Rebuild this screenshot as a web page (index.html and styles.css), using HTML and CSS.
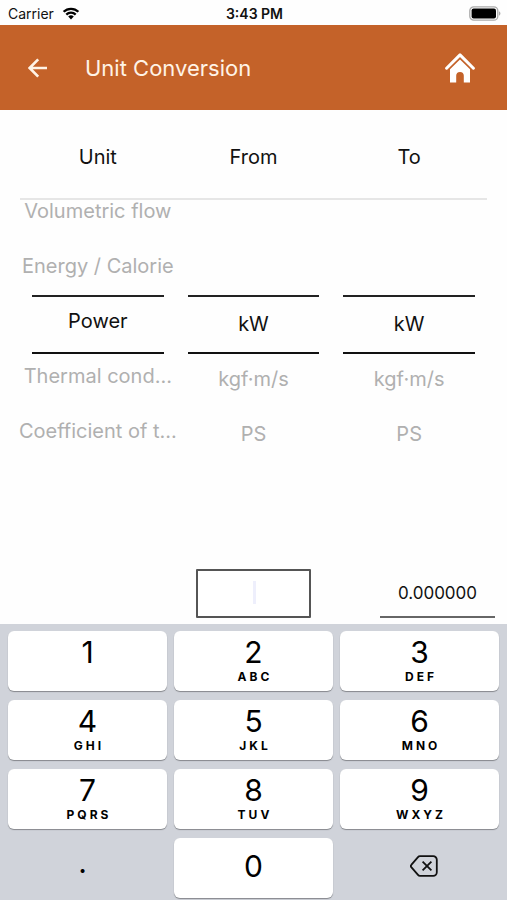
FILE: index.html
```html
<!DOCTYPE html>
<html lang="en">
<head>
    <meta charset="UTF-8">
    <meta name="viewport" content="width=device-width, initial-scale=1.0">
    <title>Unit Conversion</title>
    <link rel="stylesheet" href="styles.css">
</head>
<body>
    <div class="screen">
        <div class="status-bar">
            <div class="carrier">
                <span>Carrier</span>
                <svg width="18" height="13" viewBox="0 0 18 13" aria-hidden="true">
                    <path d="M1.6 4.8a10.6 10.6 0 0 1 14.8 0M4.3 7.6a6.7 6.7 0 0 1 9.4 0" fill="none" stroke="#000" stroke-width="2.3"/>
                    <path d="M6.2 9.6a4 4 0 0 1 5.6 0L9 12.5z" fill="#000"/>
                </svg>
            </div>
            <span class="time">3:43 PM</span>
            <div class="battery">
                <svg width="32" height="15" viewBox="0 0 32 15" aria-hidden="true">
                    <rect x="0.8" y="0.8" width="28" height="13.4" rx="4" fill="#fff" stroke="#aaa" stroke-width="1.3"/>
                    <rect x="2.6" y="2.6" width="24.4" height="9.8" rx="2" fill="#000"/>
                    <path d="M30.2 5.3c1.6.8 1.6 3.6 0 4.4z" fill="#999"/>
                </svg>
            </div>
        </div>

        <header class="header">
            <button class="icon-button" type="button" aria-label="Back">
                <svg width="20" height="20" viewBox="0 0 20 20">
                    <path d="M19 10H2M10.2 1.4L1.6 10l8.6 8.6" fill="none" stroke="#fff3e6" stroke-width="2.7"/>
                </svg>
            </button>
            <h1>Unit Conversion</h1>
            <button class="icon-button" type="button" aria-label="Home">
                <svg width="30" height="30" viewBox="0 0 30 30">
                    <path d="M1.6 15.2L15 1.9l13.4 13.3" fill="none" stroke="#fff" stroke-width="3" stroke-linecap="round" stroke-linejoin="round"/>
                    <path d="M15 6.4l10 9.9V29.5h-6.2v-6.7a3.8 3.8 0 0 0-7.6 0v6.7H5V16.3z" fill="#fff"/>
                </svg>
            </button>
        </header>

        <main class="converter">
            <div class="column-titles">
                <h2>Unit</h2>
                <h2>From</h2>
                <h2>To</h2>
            </div>

            <div class="pickers">
                <div class="picker picker-unit" role="radiogroup" aria-label="Unit">
                    <label><input type="radio" name="unit">Volumetric flow</label>
                    <label><input type="radio" name="unit">Energy / Calorie</label>
                    <label><input type="radio" name="unit" checked>Power</label>
                    <label><input type="radio" name="unit">Thermal cond...</label>
                    <label><input type="radio" name="unit">Coefficient of t...</label>
                </div>
                <div class="picker picker-first" role="radiogroup" aria-label="From">
                    <label><input type="radio" name="from" checked>kW</label>
                    <label><input type="radio" name="from">kgf·m/s</label>
                    <label><input type="radio" name="from">PS</label>
                </div>
                <div class="picker picker-first" role="radiogroup" aria-label="To">
                    <label><input type="radio" name="to" checked>kW</label>
                    <label><input type="radio" name="to">kgf·m/s</label>
                    <label><input type="radio" name="to">PS</label>
                </div>
            </div>

            <div class="values">
                <div class="value-input">
                    <input type="text" inputmode="decimal" aria-label="Value">
                    <span class="cursor"></span>
                </div>
                <output class="value-result">0.000000</output>
            </div>
        </main>

        <div class="keyboard">
            <button class="key" type="button">1<small></small></button>
            <button class="key" type="button">2<small>ABC</small></button>
            <button class="key" type="button">3<small>DEF</small></button>
            <button class="key" type="button">4<small>GHI</small></button>
            <button class="key" type="button">5<small>JKL</small></button>
            <button class="key" type="button">6<small>MNO</small></button>
            <button class="key" type="button">7<small>PQRS</small></button>
            <button class="key" type="button">8<small>TUV</small></button>
            <button class="key" type="button">9<small>WXYZ</small></button>
            <button class="key key-plain key-point" type="button">.</button>
            <button class="key" type="button">0</button>
            <button class="key key-plain key-delete" type="button" aria-label="Delete">
                <svg width="28" height="22" viewBox="0 0 28 22">
                    <path d="M10 1.2h13.2a3.6 3.6 0 0 1 3.6 3.6v12.4a3.6 3.6 0 0 1-3.6 3.6H10c-.8 0-1.5-.3-2-.9L1.5 12.4a2 2 0 0 1 0-2.8L8 2.1c.5-.6 1.2-.9 2-.9z" fill="none" stroke="#111" stroke-width="1.8"/>
                    <path d="M12.6 6.6l8.8 8.8M21.4 6.6l-8.8 8.8" fill="none" stroke="#111" stroke-width="1.8"/>
                </svg>
            </button>
        </div>
    </div>
</body>
</html>
```

FILE: styles.css
```css
* {
    box-sizing: border-box;
}
body {
    margin: 0;
    background-color: #fefefe;
    color: #111;
    font-family: Inter, "Liberation Sans", Arial, sans-serif;
}
button {
    padding: 0;
    border: none;
    background: none;
    color: inherit;
    font-family: inherit;
    cursor: pointer;
}
svg {
    display: block;
}
.screen {
    display: flex;
    flex-direction: column;
    min-height: 100vh;
}

/* status bar */
.status-bar {
    display: grid;
    grid-template-columns: 1fr auto 1fr;
    align-items: center;
    height: 25px;
    padding: 2px 6px 0 8px;
    font-size: 14px;
}
.carrier {
    display: flex;
    align-items: center;
    gap: 8px;
}
.time {
    font-weight: 600;
}
.battery {
    justify-self: end;
}

/* header */
.header {
    display: flex;
    align-items: center;
    height: 85px;
    padding: 0 32px 0 28px;
    background-color: #c46229;
}
.header h1 {
    flex: 1;
    margin: 0 0 0 37px;
    color: #fff3e6;
    font-size: 22px;
    font-weight: 400;
}

/* converter */
.converter {
    flex: 1;
    display: flex;
    flex-direction: column;
    font-size: 20px;
}
.column-titles {
    display: grid;
    grid-template-columns: repeat(3, minmax(0, 1fr));
    align-items: center;
    height: 90px;
    margin: 0 20px;
    padding-top: 6px;
    border-bottom: 2px solid #e6e6e6;
    text-align: center;
}
.column-titles h2 {
    margin: 0;
    font-size: 20px;
    font-weight: 400;
}
.pickers {
    display: grid;
    grid-template-columns: repeat(3, minmax(0, 1fr));
    grid-template-rows: 100%;
    height: 248px;
    margin: 0 20px;
}
.picker {
    position: relative;
    display: flex;
    flex-direction: column;
    align-items: center;
    justify-content: center;
}
.picker::after {
    content: "";
    position: absolute;
    left: 12px;
    right: 12px;
    top: calc(50% - 29px);
    height: 55px;
    border-top: 2px solid #222;
    border-bottom: 2px solid #111;
    pointer-events: none;
}
.picker label {
    flex: none;
    height: 55px;
    line-height: 55px;
    color: #b0b0b0;
    white-space: nowrap;
}
.picker label:has(:checked) {
    color: #111;
}
.picker input {
    position: absolute;
    opacity: 0;
    pointer-events: none;
}
.picker-unit {
    padding-bottom: 6px;
}
.picker-first {
    padding-top: 110px;
}

/* values */
.values {
    display: grid;
    grid-template-columns: repeat(3, 1fr);
    column-gap: 69px;
    height: 49px;
    margin: auto 12px 6px;
}
.value-input {
    position: relative;
    grid-column: 2;
}
.value-input input {
    width: 100%;
    height: 100%;
    padding: 0 8px;
    border: 2px solid #555;
    border-radius: 1px;
    background-color: #fff;
    font-family: inherit;
    font-size: 17px;
    text-align: center;
    caret-color: transparent;
    outline: none;
}
.cursor {
    position: absolute;
    top: 12px;
    left: calc(50% - 1px);
    width: 3px;
    height: 23px;
    background-color: #eeeffc;
    pointer-events: none;
}
.value-result {
    display: flex;
    align-items: center;
    justify-content: center;
    border-bottom: 2px solid #666;
    font-size: 17px;
}

/* keyboard */
.keyboard {
    display: grid;
    grid-template-columns: repeat(3, 1fr);
    grid-auto-rows: 60px;
    gap: 9px 7px;
    padding: 7px 8px 2px;
    background-color: #d0d3da;
}
.key {
    display: flex;
    flex-direction: column;
    align-items: center;
    justify-content: center;
    padding-bottom: 4px;
    border-radius: 6px;
    background-color: #fff;
    box-shadow: 0 1px 1px #85878c;
    color: #000;
    font-size: 30px;
    line-height: 34px;
}
.key small {
    height: 15px;
    padding-left: 3px;
    font-size: 12px;
    font-weight: 700;
    line-height: 15px;
    letter-spacing: 3px;
}
.key-plain {
    background: none;
    box-shadow: none;
}
.key-point {
    padding: 0 10px 12px 0;
}
.key-delete {
    padding-left: 8px;
}
```
